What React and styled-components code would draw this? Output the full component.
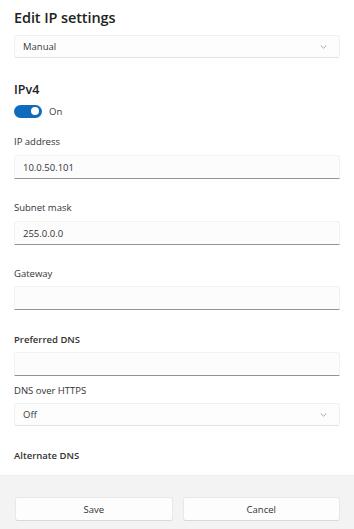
import React from "react";
import styled, { createGlobalStyle } from "styled-components";

const Global = createGlobalStyle`
  html, body { margin: 0; padding: 0; background: #ffffff; }
  body { font-family: "Open Sans", "Noto Sans", sans-serif; color: #1b1b1b; }
  * { box-sizing: border-box; }
`;

const Page = styled.div`
  width: 354px;
  height: 529px;
  display: flex;
  flex-direction: column;
  overflow: hidden;
  background: #ffffff;
`;

const Body = styled.div`
  flex: 1;
  display: flex;
  flex-direction: column;
  padding: 8px 14px 0 14px;
`;

const Title = styled.h1`
  margin: 0;
  font-size: 14.5px;
  line-height: 20px;
  font-weight: 600;
  color: #222;
  letter-spacing: -0.1px;
`;

const Section = styled.h2`
  margin: ${(p) => p.$mt}px 0 0 0;
  font-size: 12.5px;
  line-height: 18px;
  font-weight: 600;
  color: #222;
`;

const Label = styled.div`
  margin-top: ${(p) => p.$mt}px;
  font-size: 9.5px;
  line-height: 14px;
  font-weight: ${(p) => (p.$bold ? 600 : 400)};
  color: #333;
`;

const Select = styled.div`
  margin-top: ${(p) => p.$mt}px;
  height: 23px;
  display: flex;
  align-items: center;
  justify-content: space-between;
  padding: 0 12px 0 8px;
  background: #fdfdfd;
  border: 1px solid #f0f0f0;
  border-bottom-color: #e2e2e2;
  border-radius: 3px;
  font-size: 9.5px;
  color: #3a3a3a;
`;

const Input = styled.div`
  margin-top: ${(p) => p.$mt}px;
  height: 24px;
  display: flex;
  align-items: center;
  padding: 0 8px;
  background: #fcfcfc;
  border: 1px solid #f2f2f2;
  border-bottom: 1px solid #939393;
  border-radius: 3px 3px 0 0;
  font-size: 9.5px;
  color: #333;
`;

const ToggleRow = styled.div`
  margin-top: 5px;
  display: flex;
  align-items: center;
  gap: 7px;
  height: 14px;
  font-size: 9.5px;
  color: #3a3a3a;
`;

const Track = styled.div`
  width: 28px;
  height: 13px;
  border-radius: 7px;
  background: #0f6cbd;
  display: flex;
  align-items: center;
  justify-content: flex-end;
  padding-right: 3px;
`;

const Knob = styled.div`
  width: 8px;
  height: 8px;
  border-radius: 50%;
  background: #ffffff;
`;

const Chevron = () => (
  <svg width="7" height="4" viewBox="0 0 7 4" fill="none">
    <path d="M1 0.8l2.5 2.4 2.5-2.4" stroke="#a6a6a6" strokeWidth="1" strokeLinecap="round" strokeLinejoin="round" />
  </svg>
);

const Footer = styled.div`
  height: 54px;
  background: #f3f3f3;
  border-top: 1px solid #ededed;
  display: grid;
  grid-template-columns: 1fr 1fr;
  gap: 10px;
  padding: 21px 14px 0 15px;
  align-items: start;
`;

const Button = styled.button`
  height: 24px;
  background: #fdfdfd;
  border: 1px solid #e8e8e8;
  border-bottom-color: #d9d9d9;
  border-radius: 3px;
  font-family: inherit;
  font-size: 9.5px;
  color: #333;
  cursor: pointer;
`;

export default function App() {
  return (
    <Page>
      <Global />
      <Body>
        <Title>Edit IP settings</Title>
        <Select $mt={7}>
          <span>Manual</span>
          <Chevron />
        </Select>
        <Section $mt={23}>IPv4</Section>
        <ToggleRow>
          <Track>
            <Knob />
          </Track>
          <span>On</span>
        </ToggleRow>
        <Label $mt={17}>IP address</Label>
        <Input $mt={6}>10.0.50.101</Input>
        <Label $mt={22}>Subnet mask</Label>
        <Input $mt={6}>255.0.0.0</Input>
        <Label $mt={22}>Gateway</Label>
        <Input $mt={5} />
        <Label $mt={23} $bold>Preferred DNS</Label>
        <Input $mt={5} />
        <Label $mt={8}>DNS over HTTPS</Label>
        <Select $mt={5}>
          <span>Off</span>
          <Chevron />
        </Select>
        <Label $mt={23} $bold>Alternate DNS</Label>
      </Body>
      <Footer>
        <Button>Save</Button>
        <Button>Cancel</Button>
      </Footer>
    </Page>
  );
}
